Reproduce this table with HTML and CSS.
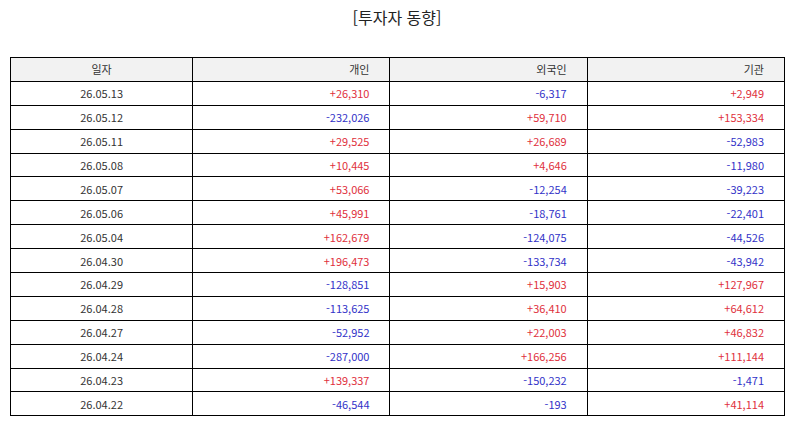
FILE: index.html
```html
<!DOCTYPE html>
<html lang="ko">
<head>
<meta charset="utf-8">
<title>투자자 동향</title>
<link rel="stylesheet" href="styles.css">
</head>
<body>
<h1 class="title">[투자자 동향]</h1>
<table class="grid">
  <colgroup>
    <col class="c-date">
    <col class="c-num">
    <col class="c-num">
    <col class="c-num">
  </colgroup>
  <thead>
    <tr><th class="date">일자</th><th>개인</th><th>외국인</th><th>기관</th></tr>
  </thead>
  <tbody>
    <tr><td class="date">26.05.13</td><td class="up">+26,310</td><td class="down">-6,317</td><td class="up">+2,949</td></tr>
    <tr><td class="date">26.05.12</td><td class="down">-232,026</td><td class="up">+59,710</td><td class="up">+153,334</td></tr>
    <tr><td class="date">26.05.11</td><td class="up">+29,525</td><td class="up">+26,689</td><td class="down">-52,983</td></tr>
    <tr><td class="date">26.05.08</td><td class="up">+10,445</td><td class="up">+4,646</td><td class="down">-11,980</td></tr>
    <tr><td class="date">26.05.07</td><td class="up">+53,066</td><td class="down">-12,254</td><td class="down">-39,223</td></tr>
    <tr><td class="date">26.05.06</td><td class="up">+45,991</td><td class="down">-18,761</td><td class="down">-22,401</td></tr>
    <tr><td class="date">26.05.04</td><td class="up">+162,679</td><td class="down">-124,075</td><td class="down">-44,526</td></tr>
    <tr><td class="date">26.04.30</td><td class="up">+196,473</td><td class="down">-133,734</td><td class="down">-43,942</td></tr>
    <tr><td class="date">26.04.29</td><td class="down">-128,851</td><td class="up">+15,903</td><td class="up">+127,967</td></tr>
    <tr><td class="date">26.04.28</td><td class="down">-113,625</td><td class="up">+36,410</td><td class="up">+64,612</td></tr>
    <tr><td class="date">26.04.27</td><td class="down">-52,952</td><td class="up">+22,003</td><td class="up">+46,832</td></tr>
    <tr><td class="date">26.04.24</td><td class="down">-287,000</td><td class="up">+166,256</td><td class="up">+111,144</td></tr>
    <tr><td class="date">26.04.23</td><td class="up">+139,337</td><td class="down">-150,232</td><td class="down">-1,471</td></tr>
    <tr><td class="date">26.04.22</td><td class="down">-46,544</td><td class="down">-193</td><td class="up">+41,114</td></tr>
  </tbody>
</table>
</body>
</html>
```

FILE: styles.css
```css
html, body {
  margin: 0;
  padding: 0;
  background: #ffffff;
}

body {
  font-family: "Noto Sans CJK KR", "Noto Sans", sans-serif;
  color: #333333;
}

.title {
  margin: 7px 0 30px;
  font-size: 16px;
  line-height: 20px;
  font-weight: 400;
  text-align: center;
  color: #222222;
}

.grid {
  margin-left: 10px;
  width: 775px;
  border-collapse: collapse;
  table-layout: fixed;
  font-size: 11px;
}

.c-date { width: 182px; }
.c-num { width: 197px; }

.grid th,
.grid td {
  border: 1px solid #000000;
  height: 23.9px;
  padding: 0 20px 0 4px;
  box-sizing: border-box;
  text-align: right;
  font-weight: 400;
  line-height: 14px;
  white-space: nowrap;
}

.grid th {
  background: #f2f2f2;
  color: #333333;
}

.grid .date {
  text-align: center;
  padding: 0;
  color: #333333;
}

.up { color: #e0303c; }
.down { color: #3232c8; }
```
